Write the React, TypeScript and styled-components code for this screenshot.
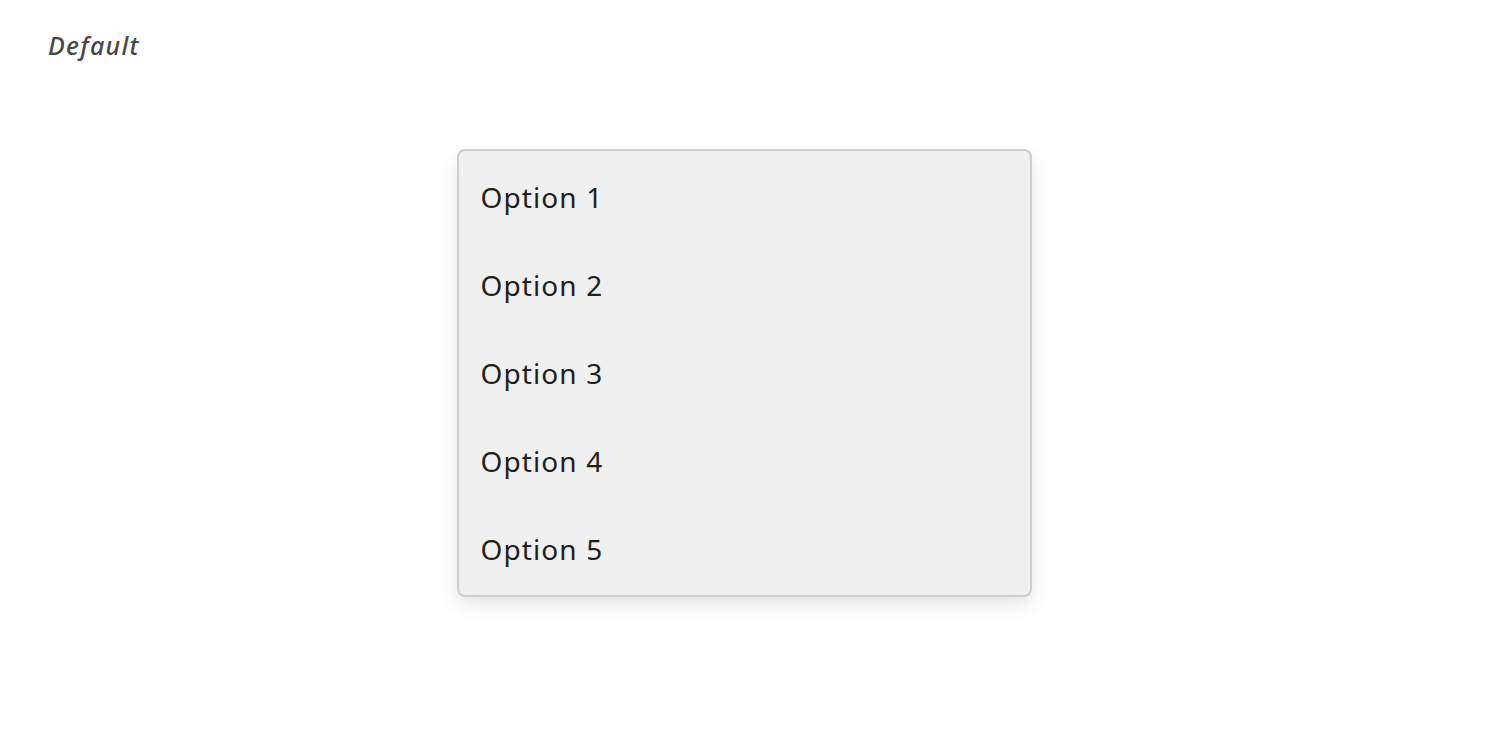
import React from "react";
import styled, { createGlobalStyle } from "styled-components";

const GlobalStyle = createGlobalStyle`
  html, body {
    margin: 0;
    padding: 0;
    background: #ffffff;
  }
  body {
    font-family: "Noto Sans", "Open Sans", sans-serif;
  }
`;

const options = ["Option 1", "Option 2", "Option 3", "Option 4", "Option 5"];

const App: React.FC = () => {
  return (
    <Page>
      <GlobalStyle />
      <Label>Default</Label>
      <Stage>
        <Menu role="listbox">
          {options.map((o) => (
            <Item key={o} role="option">
              {o}
            </Item>
          ))}
        </Menu>
      </Stage>
    </Page>
  );
};

export default App;

const Page = styled.div`
  width: 1488px;
  height: 745px;
  box-sizing: border-box;
  padding: 28px 48px 0;
`;

const Label = styled.div`
  font-family: "Noto Sans", sans-serif;
  font-style: italic;
  font-weight: 500;
  font-size: 25px;
  letter-spacing: 1.3px;
  line-height: 34px;
  color: #484848;
`;

const Stage = styled.div`
  display: flex;
  justify-content: center;
  padding-top: 87px;
  margin: 0 -48px;
`;

const Menu = styled.div`
  width: 575px;
  box-sizing: border-box;
  background: #f0f0f0;
  border: 2px solid #cecece;
  border-radius: 8px;
  padding: 2px 0;
  box-shadow: 0 8px 18px rgba(0, 0, 0, 0.1);
`;

const Item = styled.div`
  height: 88px;
  display: flex;
  align-items: center;
  padding-left: 22px;
  font-size: 28px;
  letter-spacing: 1.1px;
  color: #1f1f1f;
`;
